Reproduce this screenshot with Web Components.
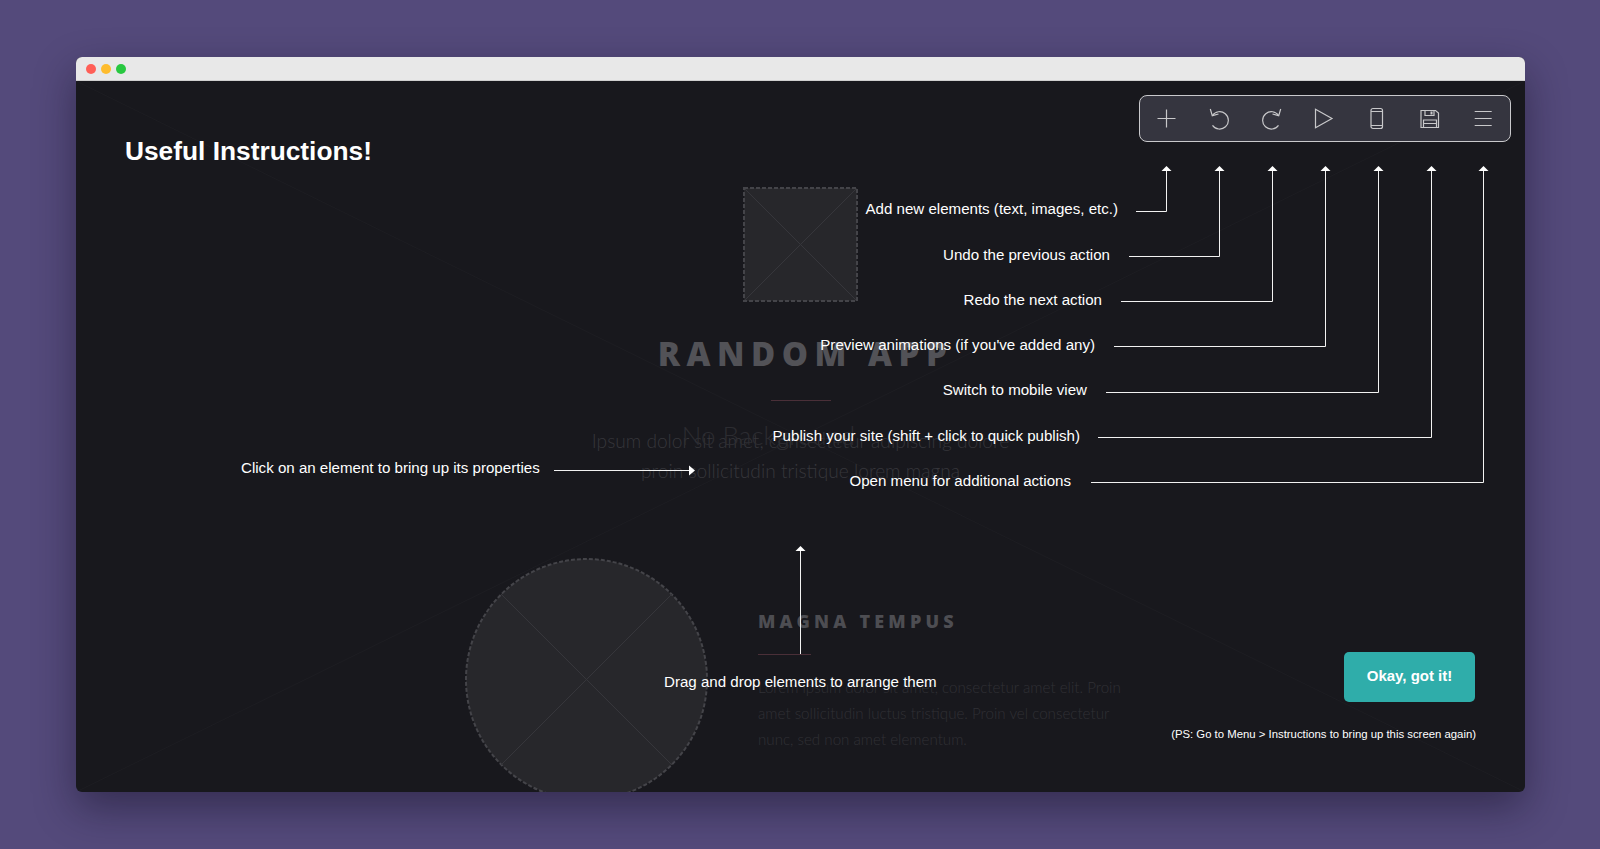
<!DOCTYPE html>
<html lang="en"><head><meta charset="utf-8"><title>Instructions</title>
<style>
html,body{margin:0;height:100%}
body{background:#544a7b;font-family:"Liberation Sans",Arial,sans-serif;overflow:hidden}
</style></head><body>
<stage-backdrop>
<app-window>
  <ghost-page slot="page"></ghost-page>
  <instructions-overlay slot="overlay"></instructions-overlay>
</app-window>
</stage-backdrop>
<script>
function def(name,html,init){customElements.define(name,class extends HTMLElement{constructor(){super();this.attachShadow({mode:'open'}).innerHTML=html;init&&init(this)}})}
def('stage-backdrop',`<style>:host{display:block;box-sizing:border-box;width:1600px;height:849px;padding:57px 75px 57px 76px;background:#544a7b}</style><slot></slot>`);
def('app-window',`<style>
:host{display:flex;flex-direction:column;height:735px;border-radius:6px;box-shadow:0 16px 42px rgba(15,12,30,.45);overflow:hidden;background:#18181d}
.bar{flex:none;height:24px;box-sizing:border-box;background:#e8e8e8;border-bottom:1px solid #cfcfcf;display:flex;align-items:center;gap:5px;padding:0 0 0 9.500px}
.bar i{width:10px;height:10px;border-radius:50%}
.body{flex:1;position:relative;overflow:hidden}
.x{position:absolute;inset:0;width:100%;height:100%}
</style><div class="bar"><i style="background:#ff5f57"></i><i style="background:#febc2e"></i><i style="background:#28c840"></i></div><div class="body"><svg class="x" viewBox="0 0 1449 711" preserveAspectRatio="none"><path d="M0 0L1449 711M0 711L1449 0" stroke="#1d1d22" stroke-width="1" fill="none"/></svg><slot name="page"></slot><slot name="overlay"></slot></div>`);
def('placeholder-square',`<style>:host{display:block;flex:none;width:115px;height:115px}svg{display:block}</style>
<svg width="115" height="115" viewBox="0 0 115 115"><rect x="1" y="1" width="113" height="113" fill="#27272b" stroke="#444449" stroke-width="2" stroke-dasharray="4 2"/><path d="M2 2L113 113M113 2L2 113" stroke="#36363b" fill="none"/></svg>`);
def('placeholder-circle',`<style>:host{display:block;flex:none;width:243px;height:243px}svg{display:block}</style>
<svg width="243" height="243" viewBox="0 0 243 243"><circle cx="121.500" cy="121.500" r="120.500" fill="#27272b" stroke="#444449" stroke-width="2" stroke-dasharray="4 2"/><path d="M36 36L207 207M207 36L36 207" stroke="#36363b" fill="none"/></svg>`);
def('ghost-page',`<style>
:host{display:flex;flex-direction:column;align-items:center;position:relative;height:711px;padding-top:106px;box-sizing:border-box;font-family:Lato,"Open Sans",sans-serif;color:#4f4f55}
h1,.rule,.hero,.low{flex:none}
h1{margin:30px 0 0 10px;font-family:"Noto Sans",sans-serif;font-size:33px;line-height:44px;font-weight:900;letter-spacing:6.500px;color:#525257;white-space:nowrap}
.rule{height:1px;background:#4a2f38}
.r1{width:60px;margin-top:24px}
.hero{position:relative;text-align:center;margin-top:25px;font-size:19.150px;line-height:30px;font-weight:300;color:#36363b;white-space:nowrap}
.nb{position:absolute;left:90px;top:-9px;font-size:26px;line-height:36px;color:#2c2c31}
.low{display:flex;align-self:flex-start;margin:72px 0 0 389px;gap:50px;align-items:flex-start}
.col{padding-top:50px;width:380px}
h2{margin:0;font-family:"Noto Sans",sans-serif;font-size:18px;line-height:26px;font-weight:900;letter-spacing:4.200px;color:#4d4d52;white-space:nowrap}
.r2{width:53px;margin-top:20px}
p{margin:19px 0 0;font-size:15.150px;line-height:26px;font-weight:300;color:#303035;white-space:nowrap}
</style>
<placeholder-square></placeholder-square>
<h1>RANDOM APP</h1>
<div class="rule r1"></div>
<div class="hero"><div class="nb">No Background</div>Ipsum dolor sit amet, consectetur adipiscing dolore<br>proin sollicitudin tristique lorem magna</div>
<div class="low"><placeholder-circle></placeholder-circle><div class="col"><h2>MAGNA TEMPUS</h2><div class="rule r2"></div><p>Lorem ipsum dolor sit amet, consectetur amet elit. Proin<br>amet sollicitudin luctus tristique. Proin vel consectetur<br>nunc, sed non amet elementum.</p></div></div>`);
const icons=[
`<path d="M12.500 3.500v18M3.500 12.500h18"/>`,
`<g transform="translate(0 .5)"><path d="M3.300 2.500L5.300 9.200L11.500 7.500"/><path d="M5.300 9.200A8.700 8.700 0 1 1 5.500 18.800"/></g>`,
`<g transform="translate(0 .5)"><path d="M20.700 2.500L18.700 9.200L12.500 7.500"/><path d="M18.700 9.200A8.700 8.700 0 1 0 18.500 18.800"/></g>`,
`<path d="M3.500 3.300L20 12.500L3.500 21.700z"/>`,
`<rect x="6" y="2.500" width="11.500" height="20" rx="2"/><path d="M6 5.500h11.500M6 19.500h11.500"/>`,
`<path d="M3 4.500h14.500l3 2.500v14.500h-17.500z"/><path d="M7 4.500v5h9v-5"/><path d="M13.500 5.500v3" stroke-width="2"/><path d="M5.500 21.500v-7.500h13v7.500"/><path d="M5.500 17.500h13"/>`,
`<path d="M3.700 5.500h17M3.700 12.500h17M3.700 19.500h17"/>`];
def('tool-bar',`<style>
:host{display:flex;box-sizing:border-box;width:372px;height:47px;align-items:flex-start;justify-content:space-between;padding:10px 15px 0 14px;background:#35353f;border:1px solid #c9c9cc;border-radius:8px}
svg{width:24px;height:24px;fill:none;stroke:#c8c8ca;stroke-width:1.200;display:block}
</style>`+icons.map(d=>`<svg viewBox="0 0 24 24">${d}</svg>`).join(''));
const rows=[['Add new elements (text, images, etc.)',187,1118,1166,1136,199],['Undo the previous action',232,1110,1219,1129,245],['Redo the next action',277,1102,1272,1121,290],["Preview animations (if you've added any)",322,1095,1325,1114,335],['Switch to mobile view',368,1087,1378,1106,380],['Publish your site (shift + click to quick publish)',413,1080,1431,1098,426],['Open menu for additional actions',458,1071,1483,1091,471]];
const OX=76,OY=81;
let lab='',lines='';
rows.forEach(([t,y,tr,ax,lx,ty])=>{
  lab+=`<span class="lb" style="top:${ty-OY}px;right:${1525-tr}px">${t}</span>`;
  const ly=y+24;
  lines+=`<path class="w" d="M${lx-OX} ${ly-OY+.5}H${ax-OX+.5}V${171-OY}"/><path class="h" d="M${ax-OX-4.5} ${171-OY}L${ax-OX+.5} ${166-OY}L${ax-OX+5.5} ${171-OY}z"/>`;
});
def('instructions-overlay',`<style>
:host{position:absolute;inset:0;display:block;color:#fff}
svg{position:absolute;inset:0;width:100%;height:100%}
.w{fill:none;stroke:#f2f2f2;stroke-width:1}.h{fill:#fff}
.title{position:absolute;left:49px;top:55px;margin:0;font-size:26.300px;line-height:30px;font-weight:700}
.lb{position:absolute;font-size:15.100px;line-height:20px;white-space:nowrap}
.tb{position:absolute;left:1063px;top:14px}
.btn{position:absolute;left:1268px;top:571px;width:131px;height:50px;background:#2fadaa;border:0;border-radius:5px;color:#fff;font:700 15px/20px "Liberation Sans",Arial,sans-serif;padding:0 0 2px}
.ps{position:absolute;right:49px;top:645px;font-size:11.350px;line-height:16px;white-space:nowrap}
</style>
<svg viewBox="0 0 1449 711">${lines}
<path class="w" d="M478 389.500H613"/><path class="h" d="M619 389.500L613 384.500V394.500z"/>
<path class="w" d="M724.500 573V470"/><path class="h" d="M719.500 470L724.500 465L729.500 470z"/>
</svg>
<h2 class="title">Useful Instructions!</h2>
<tool-bar class="tb"></tool-bar>
${lab}
<span class="lb" style="left:165px;top:377px">Click on an element to bring up its properties</span>
<span class="lb" style="left:588px;top:591px">Drag and drop elements to arrange them</span>
<button class="btn">Okay, got it!</button>
<span class="ps">(PS: Go to Menu &gt; Instructions to bring up this screen again)</span>`);
</script>
</body></html>
